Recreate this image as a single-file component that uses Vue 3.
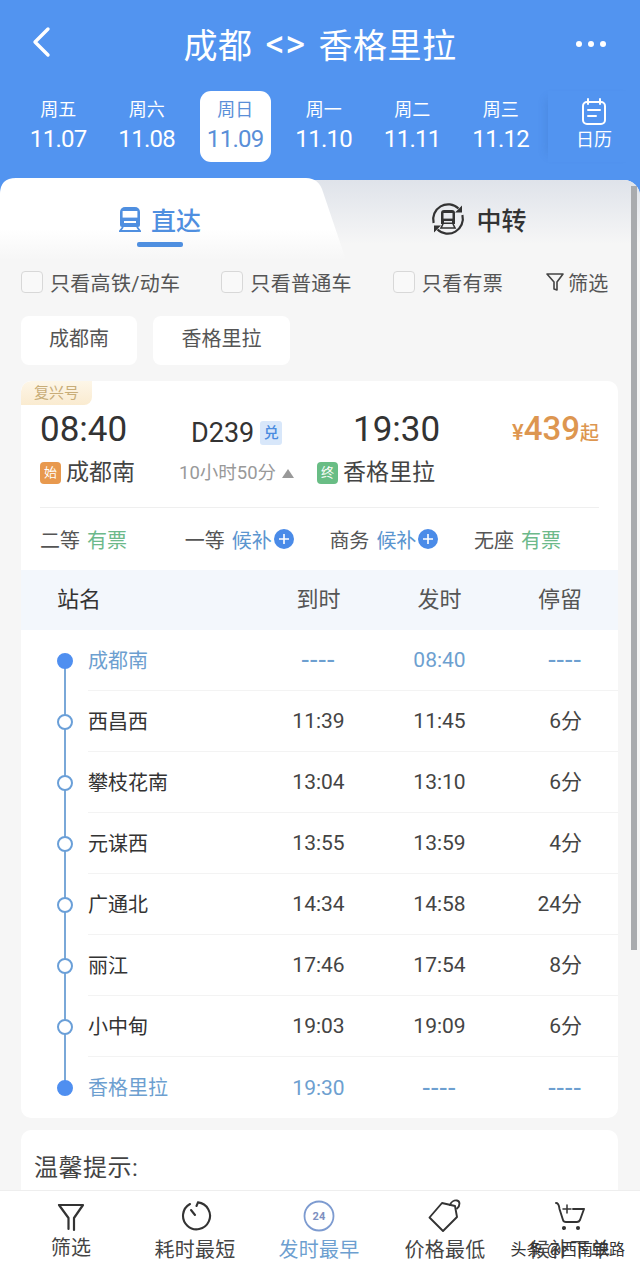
<script setup>
const days = [
  { week: "周五", date: "11.07" },
  { week: "周六", date: "11.08" },
  { week: "周日", date: "11.09", active: true },
  { week: "周一", date: "11.10" },
  { week: "周二", date: "11.11" },
  { week: "周三", date: "11.12" },
];

const filters = ["只看高铁/动车", "只看普通车", "只看有票"];

const seats = [
  { name: "二等", state: "有票", kind: "ok" },
  { name: "一等", state: "候补", kind: "wait" },
  { name: "商务", state: "候补", kind: "wait" },
  { name: "无座", state: "有票", kind: "ok" },
];

const stops = [
  { name: "成都南", arrive: "----", leave: "08:40", stay: "----", end: true },
  { name: "西昌西", arrive: "11:39", leave: "11:45", stay: "6分" },
  { name: "攀枝花南", arrive: "13:04", leave: "13:10", stay: "6分" },
  { name: "元谋西", arrive: "13:55", leave: "13:59", stay: "4分" },
  { name: "广通北", arrive: "14:34", leave: "14:58", stay: "24分" },
  { name: "丽江", arrive: "17:46", leave: "17:54", stay: "8分" },
  { name: "小中甸", arrive: "19:03", leave: "19:09", stay: "6分" },
  { name: "香格里拉", arrive: "19:30", leave: "----", stay: "----", end: true },
];
</script>

<template>
  <div class="page">
    <header class="top">
      <div class="titlebar">
        <svg class="back" width="24" height="34" viewBox="0 0 24 34">
          <path d="M18 4 L5 17 L18 30" fill="none" stroke="#fff" stroke-width="3.4" stroke-linecap="round" stroke-linejoin="round" />
        </svg>
        <h1>成都<span class="arrows">&lt;&gt;</span>香格里拉</h1>
        <div class="dots"><i></i><i></i><i></i></div>
      </div>
      <div class="days">
        <div v-for="d in days" :key="d.date" class="day" :class="{ active: d.active }">
          <span class="week">{{ d.week }}</span>
          <span class="date">{{ d.date }}</span>
        </div>
        <div class="cal">
          <svg width="26" height="28" viewBox="0 0 26 28" fill="none" stroke="#fff" stroke-width="2">
            <rect x="2" y="4" width="22" height="22" rx="4" />
            <path d="M7 1v5M19 1v5M7 12h12M7 18h8" stroke-linecap="round" />
          </svg>
          <span>日历</span>
        </div>
      </div>
    </header>

    <main class="panel">
      <i class="scrollbar"></i>
      <div class="tabs">
        <svg class="tab-shape" width="346" height="82" viewBox="0 0 346 82" preserveAspectRatio="none">
          <defs>
            <linearGradient id="tabfill" x1="0" y1="0" x2="0" y2="1">
              <stop offset="0.62" stop-color="#fff" />
              <stop offset="1" stop-color="#f6f6f6" />
            </linearGradient>
          </defs>
          <path d="M0 82 V16 Q0 0 16 0 H306 Q319 0 323 14 L346 82 Z" fill="url(#tabfill)" />
        </svg>
        <div class="tab on">
          <svg width="22" height="26" viewBox="0 0 22 26">
            <path d="M6 1h10a5 5 0 0 1 5 5v13a2 2 0 0 1-2 2H3a2 2 0 0 1-2-2V6a5 5 0 0 1 5-5z" fill="#4f8fe0" />
            <rect x="3.6" y="5" width="14.8" height="6.6" fill="#fff" />
            <rect x="5" y="15" width="12" height="2" fill="#fff" />
            <path d="M4 21 L1 25 H21 L18 21" fill="none" stroke="#4f8fe0" stroke-width="1.8" />
          </svg>
          <span>直达</span>
          <i class="bar"></i>
        </div>
        <div class="tab off">
          <svg width="34" height="34" viewBox="0 0 34 34" fill="none">
            <path d="M2.6 21A15 15 0 0 1 27.5 6.5" stroke="#333" stroke-width="2.2" />
            <path d="M31.4 13A15 15 0 0 1 6.5 27.5" stroke="#333" stroke-width="2.2" />
            <path d="M31 3.5v7h-7z M3 30.5v-7h7z" fill="#333" />
            <path d="M13 8h8a3 3 0 0 1 3 3v11H10V11a3 3 0 0 1 3-3z" fill="#333" />
            <rect x="12.5" y="11" width="9" height="5.6" fill="#e8eaee" />
            <rect x="13" y="19" width="8" height="1.5" fill="#e8eaee" />
            <path d="M12 22 L10 26 H24 L22 22" stroke="#333" stroke-width="1.6" />
          </svg>
          <span>中转</span>
        </div>
      </div>

      <div class="filters">
        <label v-for="f in filters" :key="f" class="check"><i></i>{{ f }}</label>
        <div class="screen">
          <svg width="18" height="20" viewBox="0 0 18 20" fill="none" stroke="#444" stroke-width="1.6" stroke-linejoin="round">
            <path d="M1 2h16l-6 8v8l-3-1v-7z" />
          </svg>
          <span>筛选</span>
        </div>
      </div>

      <div class="chips">
        <div class="chip first">成都南</div>
        <div class="chip second">香格里拉</div>
      </div>

      <section class="card">
        <div class="tag">复兴号</div>
        <div class="summary">
          <div class="col-a">
            <div class="time">08:40</div>
            <div class="station"><b class="mark start">始</b>成都南</div>
          </div>
          <div class="col-b">
            <div class="code">D239<b>兑</b></div>
            <div class="span">10小时50分<i></i></div>
          </div>
          <div class="col-c">
            <div class="time">19:30</div>
            <div class="station"><b class="mark stop">终</b>香格里拉</div>
          </div>
          <div class="price"><small>¥</small>439<small class="qi">起</small></div>
        </div>
        <div class="seats">
          <div v-for="s in seats" :key="s.name" class="seat">
            {{ s.name }}
            <span :class="s.kind">{{ s.state }}</span>
            <svg v-if="s.kind === 'wait'" width="20" height="20" viewBox="0 0 20 20">
              <circle cx="10" cy="10" r="10" fill="#4a8be8" />
              <path d="M5 10h10M10 5v10" stroke="#fff" stroke-width="1.6" />
            </svg>
          </div>
        </div>
        <div class="thead">
          <span class="th-name">站名</span>
          <span>到时</span>
          <span>发时</span>
          <span class="th-stay">停留</span>
        </div>
        <div class="rows">
          <div v-for="(s, i) in stops" :key="s.name" class="row" :class="{ hl: s.end }">
            <div class="rail" :class="{ first: i === 0, last: i === stops.length - 1 }"><i></i></div>
            <div class="cells">
              <span class="name">{{ s.name }}</span>
              <span :class="{ blue: s.arrive === '19:30', dash: s.arrive === '----' }">{{ s.arrive }}</span>
              <span :class="{ blue: s.leave === '08:40', dash: s.leave === '----' }">{{ s.leave }}</span>
              <span class="stay" :class="{ dash: s.stay === '----' }">{{ s.stay }}</span>
            </div>
          </div>
        </div>
      </section>

      <section class="tips">温馨提示:</section>
    </main>

    <nav class="bottom">
      <div class="nav-item narrow">
        <svg width="34" height="34" viewBox="0 0 34 34" fill="none" stroke="#333" stroke-width="2.2" stroke-linecap="round" stroke-linejoin="round">
          <path d="M14.5 30V19L5 6h24l-9 13v12" />
        </svg>
        <span>筛选</span>
      </div>
      <div class="nav-item">
        <svg width="34" height="34" viewBox="0 0 34 34" fill="none" stroke="#333" stroke-width="2.1" stroke-linecap="round">
          <path d="M12 5A13.5 13.5 0 1 0 20 3.4L18.5 7" />
          <path d="M13 11l4 5" />
        </svg>
        <span>耗时最短</span>
      </div>
      <div class="nav-item on">
        <svg width="34" height="34" viewBox="0 0 34 34" fill="none">
          <circle cx="17" cy="17" r="14.5" stroke="#7d9bd0" stroke-width="1.8" />
          <text x="17" y="21" text-anchor="middle" font-size="11" font-weight="700" fill="#7d8fc0" font-family="Roboto, sans-serif">24</text>
        </svg>
        <span>发时最早</span>
      </div>
      <div class="nav-item">
        <svg width="34" height="34" viewBox="0 0 34 34" fill="none" stroke="#333" stroke-width="1.9" stroke-linejoin="round" stroke-linecap="round">
          <path d="M1.5 18.5 L14 4 L27 7 L29 18 L15 32 Z" />
          <path d="M22 6C23 3 26 1 29 1.5s3.5 5 0 8" />
        </svg>
        <span>价格最低</span>
      </div>
      <div class="nav-item">
        <svg width="30" height="34" viewBox="0 0 30 34" fill="none" stroke="#333" stroke-width="1.9" stroke-linecap="round" stroke-linejoin="round">
          <path d="M1 4c3 0 3 3 3.5 6L8 21q.5 2 3 2h11q2 0 3-2l4-11H18" />
          <path d="M12 6v8M8 10h8" stroke-width="1.5" />
          <circle cx="9" cy="29" r="1.1" fill="#333" />
          <circle cx="23" cy="29" r="1.1" fill="#333" />
        </svg>
        <span>候补下单</span>
      </div>
      <div class="mark-wm">头条<em>@西南铁路</em></div>
    </nav>
  </div>
</template>

<style>
html, body { margin: 0; padding: 0; }
</style>

<style scoped>
.page {
  position: relative;
  width: 640px;
  height: 1273px;
  overflow: hidden;
  display: flex;
  flex-direction: column;
  background: #5294f0;
  font-family: Roboto, "Noto Sans CJK SC", sans-serif;
  color: #333;
}

.top { height: 180px; flex: none; color: #fff; }
.titlebar {
  height: 91px;
  display: flex;
  align-items: center;
  justify-content: center;
  position: relative;
  padding-bottom: 4px;
  box-sizing: border-box;
}
.back { position: absolute; left: 30px; top: 25px; }
h1 {
  margin: 0;
  font-size: 34px;
  font-weight: 400;
  letter-spacing: 0.5px;
  display: flex;
  align-items: center;
}
.arrows { font-size: 38px; margin: 0 13px 0 13px; line-height: 1; }
.dots { position: absolute; right: 34px; top: 41px; display: flex; gap: 6px; }
.dots i { width: 6px; height: 6px; border-radius: 50%; background: #fff; }

.days { display: flex; padding-left: 14px; height: 71px; position: relative; }
.day {
  width: 88.5px;
  flex: none;
  display: flex;
  flex-direction: column;
  align-items: center;
  box-sizing: border-box;
  padding-top: 7px;
}
.day.active { position: relative; color: #5a8fd8; }
.day.active::before {
  content: "";
  position: absolute;
  left: 9px;
  top: 0;
  width: 71px;
  height: 71px;
  border-radius: 11px;
  background: #fff;
}
.week, .date { position: relative; }
.week { font-size: 18px; line-height: 24px; }
.date { font-size: 24px; line-height: 34px; letter-spacing: -0.7px; }
.cal {
  margin-left: 3px;
  width: 94px;
  display: flex;
  flex-direction: column;
  align-items: center;
  gap: 2px;
  font-size: 18px;
  line-height: 24px;
  padding-top: 7px;
  box-sizing: border-box;
  box-shadow: -8px 0 10px -8px rgba(40, 80, 140, 0.2);
}

.panel {
  flex: 1;
  min-height: 0;
  border-radius: 16px 16px 0 0;
  background: #f6f6f6;
  position: relative;
}
.scrollbar {
  position: absolute;
  left: 631px;
  top: 6px;
  width: 6px;
  height: 764px;
  background: #a9abae;
  z-index: 1;
}

.tabs {
  height: 80px;
  display: flex;
  position: relative;
  border-radius: 16px 16px 0 0;
  background: linear-gradient(#dfe3ea, #f6f6f6 80%);
}
.tab-shape { position: absolute; left: 0; top: -2px; }
.tab {
  position: relative;
  flex: none;
  display: flex;
  align-items: center;
  justify-content: center;
  gap: 10px;
  font-size: 25px;
  font-weight: 500;
  height: 78px;
  color: #333;
}
.tab.on { width: 320px; color: #4f8fe0; }
.tab.off { width: 312px; padding-left: 10px; padding-right: 4px; gap: 11px; box-sizing: border-box; }
.bar {
  position: absolute;
  left: 137px;
  top: 62px;
  width: 46px;
  height: 5px;
  border-radius: 2px;
  background: #4f8fe0;
}

.filters {
  height: 40px;
  margin-top: 2px;
  display: flex;
  align-items: center;
  padding-left: 21px;
  font-size: 20px;
  letter-spacing: 0.3px;
  color: #555;
}
.check { display: flex; align-items: center; gap: 7px; margin-right: 41px; }
.check i {
  width: 20px;
  height: 20px;
  border: 1.5px solid #d8d8d8;
  border-radius: 4px;
  background: #f9f9f9;
}
.screen { display: flex; align-items: center; gap: 4px; margin-left: 2px; }

.chips { display: flex; gap: 16px; padding: 14px 0 0 21px; }
.chip {
  height: 49px;
  line-height: 47px;
  border-radius: 8px;
  background: #fff;
  text-align: center;
  font-size: 20px;
  color: #555;
}
.chip.first { width: 116px; }
.chip.second { width: 137px; }

.card {
  position: relative;
  width: 597px;
  margin: 16px 0 0 21px;
  border-radius: 10px;
  background: #fff;
  overflow: hidden;
}
.tag {
  width: 71px;
  height: 24px;
  line-height: 24px;
  padding-left: 13px;
  box-sizing: border-box;
  border-radius: 10px 0 8px 0;
  background: linear-gradient(#fdf6e8, #faebd0);
  font-size: 15px;
  color: #c8ad78;
}

.summary {
  display: flex;
  height: 102px;
  margin: 0 19px;
  border-bottom: 1px solid #efefef;
}
.col-a { width: 140px; }
.col-b { width: 120px; padding-top: 10px; }
.col-c { width: 184px; padding-left: 17px; box-sizing: border-box; }
.time { font-size: 35px; line-height: 50px; color: #333; font-weight: 400; }
.col-c .time { padding-left: 36px; }
.station { display: flex; align-items: center; font-size: 23px; line-height: 36px; color: #444; gap: 5px; }
.mark {
  width: 21px;
  height: 22px;
  border-radius: 4px;
  color: #fff;
  font-size: 13px;
  font-weight: 400;
  display: flex;
  align-items: center;
  justify-content: center;
}
.mark.start { background: #e8994e; }
.mark.stop { background: #69bd85; }
.code { font-size: 27px; line-height: 36px; font-weight: 400; display: flex; align-items: center; gap: 6px; color: #333; padding-left: 11px; }
.code b {
  width: 22px;
  height: 24px;
  border-radius: 3px;
  background: #d8e7fa;
  color: #4a8be0;
  font-size: 15px;
  font-weight: 500;
  display: flex;
  align-items: center;
  justify-content: center;
}
.span { font-size: 18.5px; line-height: 24px; color: #999; margin-top: 10px; white-space: nowrap; display: flex; align-items: center; gap: 6px; margin-left: -1px; }
.span i {
  border-left: 6.5px solid transparent;
  border-right: 6.5px solid transparent;
  border-bottom: 9px solid #999;
}
.price { flex: 1; color: #dd9650; font-size: 33px; font-weight: 500; line-height: 48px; text-align: right; white-space: nowrap; }
.price small { font-size: 22px; }
.price .qi { font-size: 19px; }

.seats {
  display: flex;
  height: 62px;
  align-items: center;
  padding-left: 19px;
  font-size: 20px;
  color: #555;
}
.seat { width: 144.7px; flex: none; display: flex; align-items: center; gap: 7px; }
.seat svg { margin-left: -5px; }
.ok { color: #6cb98a; }
.wait { color: #5b95cf; }

.thead {
  height: 60px;
  padding-bottom: 6px;
  box-sizing: border-box;
  display: grid;
  grid-template-columns: 237px 121px 121px 118px;
  align-items: center;
  background: #f3f7fc;
  font-size: 22px;
  color: #555;
  text-align: center;
}
.th-name { text-align: left; padding-left: 36px; color: #333; }
.th-stay { text-align: right; padding-right: 36px; }

.row { display: flex; height: 61px; }
.rail { width: 67px; flex: none; position: relative; display: flex; align-items: center; box-sizing: border-box; padding-left: 36px; }
.rail::before {
  content: "";
  position: absolute;
  left: 43px;
  top: 0;
  bottom: 0;
  width: 2px;
  background: #7aa8d8;
}
.rail.first::before { top: 50%; }
.rail.last::before { bottom: 50%; }
.rail i {
  position: relative;
  width: 12px;
  height: 12px;
  border: 2px solid #6a9fd8;
  border-radius: 50%;
  background: #fff;
}
.row.hl .rail i { background: #4f8ff0; border-color: #4f8ff0; }
.cells {
  flex: 1;
  display: grid;
  grid-template-columns: 170px 121px 121px 118px;
  align-items: center;
  text-align: center;
  font-size: 21px;
  color: #444;
  border-bottom: 1px solid #f3f3f3;
}
.cells span { line-height: 24px; }
.cells .stay { text-align: right; padding-right: 36px; }
.cells .dash { font-size: 27px; letter-spacing: 1px; }
.row:last-child .cells { border-bottom: none; }
.name { text-align: left; font-size: 20px; color: #333; padding-top: 1px; }
.hl .name, .blue, .dash { color: #6d9fd0; }

.tips {
  width: 597px;
  height: 80px;
  margin: 12px 0 0 21px;
  padding: 24px 0 0 13px;
  box-sizing: border-box;
  border-radius: 10px;
  background: #fff;
  font-size: 24px;
  line-height: 28px;
  letter-spacing: 0.5px;
  color: #444;
}

.bottom {
  position: absolute;
  left: 0;
  right: 0;
  bottom: 0;
  height: 83px;
  display: grid;
  grid-template-columns: 142px 106px 142px 110px 140px;
  background: #fff;
  border-top: 1px solid #eee;
  box-sizing: border-box;
}
.nav-item {
  display: flex;
  flex-direction: column;
  align-items: center;
  padding-top: 8px;
  font-size: 20px;
  letter-spacing: 0.3px;
  line-height: 28px;
  color: #444;
}
.nav-item svg { flex: none; }
.nav-item span { margin-top: 3px; }
.nav-item.narrow span { margin-top: 1px; }
.nav-item.on { color: #6d9fd0; }
.mark-wm {
  position: absolute;
  right: 15px;
  bottom: 11px;
  font-size: 16px;
  line-height: 24px;
  color: #333;
}
.mark-wm em { font-style: normal; margin-left: 4px; }
</style>
